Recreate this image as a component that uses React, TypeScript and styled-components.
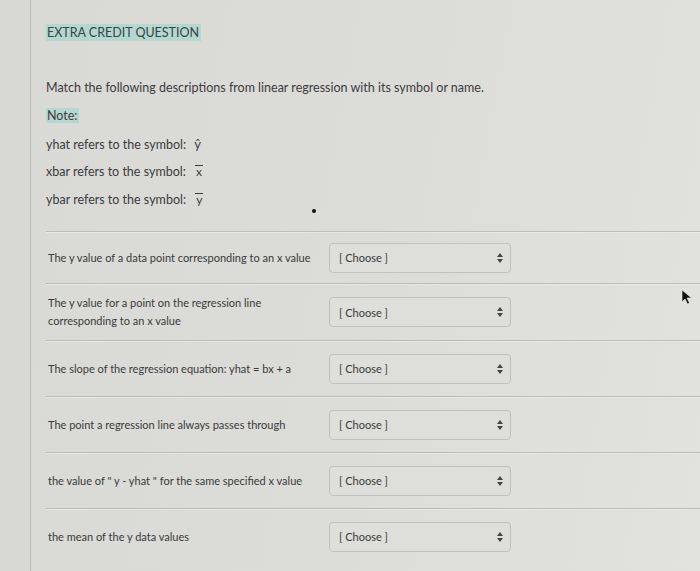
import React from 'react'
import styled, { createGlobalStyle } from 'styled-components'

const GlobalStyle = createGlobalStyle`
  html, body {
    margin: 0;
    padding: 0;
    background: #dadad6;
  }
  body {
    font-family: Lato, "Open Sans", "Liberation Sans", sans-serif;
    color: #3c3c3c;
  }
`

const Page = styled.div`
  position: relative;
  display: flex;
  width: 700px;
  height: 571px;
  overflow: hidden;
  background: linear-gradient(100deg, #d9d9d5 0%, #dcdcd8 55%, #e2e2de 100%);
`

const Gutter = styled.div`
  width: 30px;
  flex-shrink: 0;
  background: #d8d8d4;
  border-right: 1px solid #b9b9b4;
`

const Content = styled.div`
  flex: 1;
  display: flex;
  flex-direction: column;
  padding: 24px 0 0 15px;
`

const Intro = styled.div`
  display: flex;
  flex-direction: column;
  align-items: flex-start;
  padding-bottom: 22px;
`

const Title = styled.span`
  background: #b6d7d0;
  font-size: 12.5px;
  line-height: 17px;
  padding: 0 2px 0 1px;
  color: #324645;
`

const Line = styled.p<{ $top?: number }>`
  margin: ${(p) => p.$top ?? 10}px 0 0 0;
  font-size: 12.5px;
  line-height: 18px;
  height: 18px;
`

const Highlight = styled.span`
  background: #b6d7d0;
  padding: 0 1px;
`

const Hat = styled.span`
  display: inline-block;
  margin-left: 5px;
  font-size: 13px;
  line-height: 18px;
`

const Bar = styled.span`
  display: inline-block;
  margin-left: 6px;
  line-height: 11px;
  border-top: 1px solid #3c3c3c;
  padding: 0 1px;
  font-size: 12px;
`

const Rows = styled.div`
  display: flex;
  flex-direction: column;
`

const Row = styled.div<{ $h: number }>`
  display: flex;
  align-items: center;
  gap: 11px;
  height: ${(p) => p.$h}px;
  border-top: 1px solid #bdbdb8;
  box-shadow: inset 0 1px 0 #e8e8e4;
`

const Label = styled.div`
  width: 270px;
  padding-left: 2px;
  font-size: 11px;
  line-height: 18px;
  color: #3a3a3a;
`

const Select = styled.div`
  width: 182px;
  height: 30px;
  box-sizing: border-box;
  display: flex;
  align-items: center;
  justify-content: space-between;
  padding: 0 7px 0 9px;
  border: 1px solid #c2c2bd;
  border-radius: 4px;
  background: #dededa;
  font-size: 11px;
  color: #3a3a3a;
`

const Arrows = styled.svg`
  width: 6px;
  height: 10px;
`

const Cursor = styled.svg`
  position: absolute;
  left: 681px;
  top: 289px;
  width: 12px;
  height: 16px;
`

const Speck = styled.span`
  position: absolute;
  left: 312px;
  top: 209px;
  width: 4px;
  height: 4px;
  border-radius: 50%;
  background: #111;
`

const rows = [
  { text: 'The y value of a data point corresponding to an x value', h: 51 },
  { text: 'The y value for a point on the regression line corresponding to an x value', h: 56 },
  { text: 'The slope of the regression equation: yhat = bx + a', h: 55 },
  { text: 'The point a regression line always passes through', h: 55 },
  { text: 'the value of " y - yhat " for the same specified x value', h: 55 },
  { text: 'the mean of the y data values', h: 55 },
]

const App = () => {
  return (
    <>
      <GlobalStyle />
      <Page>
        <Gutter />
        <Content>
          <Intro>
            <Title>EXTRA CREDIT QUESTION</Title>
            <Line $top={38}>
              Match the following descriptions from linear regression with its symbol or name.
            </Line>
            <Line>
              <Highlight>Note:</Highlight>
            </Line>
            <Line>
              yhat refers to the symbol: <Hat>ŷ</Hat>
            </Line>
            <Line>
              xbar refers to the symbol: <Bar>x</Bar>
            </Line>
            <Line>
              ybar refers to the symbol: <Bar>y</Bar>
            </Line>
          </Intro>
          <Rows>
            {rows.map((row) => (
              <Row key={row.text} $h={row.h}>
                <Label>{row.text}</Label>
                <Select>
                  <span>[ Choose ]</span>
                  <Arrows viewBox="0 0 6 10">
                    <path d="M3 0 L6 4 L0 4 Z M3 10 L6 6 L0 6 Z" fill="#444" />
                  </Arrows>
                </Select>
              </Row>
            ))}
          </Rows>
        </Content>
        <Cursor viewBox="0 0 12 16">
          <path d="M1 1 L1 13 L4 10 L6.5 15 L8.5 14 L6 9 L10.5 9 Z" fill="#111" stroke="#eee" strokeWidth="0.6" />
        </Cursor>
        <Speck />
      </Page>
    </>
  )
}

export default App
